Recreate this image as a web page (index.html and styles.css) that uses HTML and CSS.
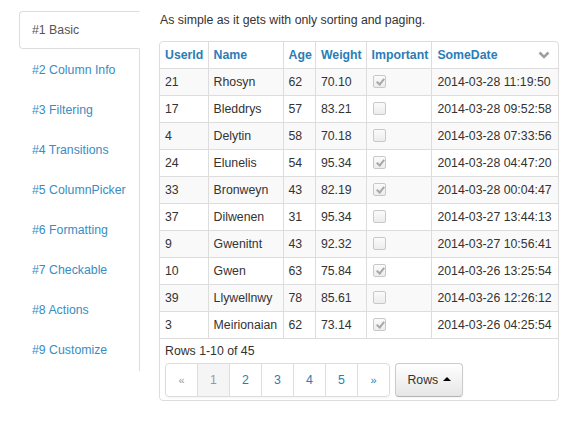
FILE: index.html
```html
<!DOCTYPE html>
<html>
<head>
<meta charset="utf-8">
<link rel="stylesheet" href="styles.css">
</head>
<body>
<div class="page">
  <ul class="tabs">
    <li class="active"><a>#1 Basic</a></li>
    <li><a>#2 Column Info</a></li>
    <li><a>#3 Filtering</a></li>
    <li><a>#4 Transitions</a></li>
    <li><a>#5 ColumnPicker</a></li>
    <li><a>#6 Formatting</a></li>
    <li><a>#7 Checkable</a></li>
    <li><a>#8 Actions</a></li>
    <li><a>#9 Customize</a></li>
  </ul>
  <div class="main">
    <p class="desc">As simple as it gets with only sorting and paging.</p>
    <div class="grid">
      <table>
        <colgroup>
          <col class="c1"><col class="c2"><col class="c3"><col class="c4"><col class="c5"><col class="c6">
        </colgroup>
        <thead>
          <tr>
            <th>UserId</th><th>Name</th><th>Age</th><th>Weight</th><th>Important</th>
            <th class="last-h">SomeDate<svg class="chev" width="12" height="8" viewBox="0 0 12 8"><polyline points="1.5,1.5 6,6 10.5,1.5" fill="none" stroke="#a0a0a0" stroke-width="2.6"/></svg></th>
          </tr>
        </thead>
        <tbody>
          <tr><td>21</td><td>Rhosyn</td><td>62</td><td>70.10</td><td><span class="cb on"></span></td><td>2014-03-28 11:19:50</td></tr>
          <tr><td>17</td><td>Bleddrys</td><td>57</td><td>83.21</td><td><span class="cb"></span></td><td>2014-03-28 09:52:58</td></tr>
          <tr><td>4</td><td>Delytin</td><td>58</td><td>70.18</td><td><span class="cb"></span></td><td>2014-03-28 07:33:56</td></tr>
          <tr><td>24</td><td>Elunelis</td><td>54</td><td>95.34</td><td><span class="cb on"></span></td><td>2014-03-28 04:47:20</td></tr>
          <tr><td>33</td><td>Bronweyn</td><td>43</td><td>82.19</td><td><span class="cb on"></span></td><td>2014-03-28 00:04:47</td></tr>
          <tr><td>37</td><td>Dilwenen</td><td>31</td><td>95.34</td><td><span class="cb"></span></td><td>2014-03-27 13:44:13</td></tr>
          <tr><td>9</td><td>Gwenitnt</td><td>43</td><td>92.32</td><td><span class="cb"></span></td><td>2014-03-27 10:56:41</td></tr>
          <tr><td>10</td><td>Gwen</td><td>63</td><td>75.84</td><td><span class="cb on"></span></td><td>2014-03-26 13:25:54</td></tr>
          <tr><td>39</td><td>Llywellnwy</td><td>78</td><td>85.61</td><td><span class="cb"></span></td><td>2014-03-26 12:26:12</td></tr>
          <tr><td>3</td><td>Meirionaian</td><td>62</td><td>73.14</td><td><span class="cb on"></span></td><td>2014-03-26 04:25:54</td></tr>
        </tbody>
      </table>
      <div class="footer">
        <div class="count">Rows 1-10 of 45</div>
        <div class="controls">
          <ul class="pager">
            <li class="dis">&laquo;</li>
            <li class="cur">1</li>
            <li>2</li>
            <li>3</li>
            <li>4</li>
            <li>5</li>
            <li class="next">&raquo;</li>
          </ul>
          <button class="rows-btn">Rows <span class="caret"></span></button>
        </div>
      </div>
    </div>
  </div>
</div>
</body>
</html>
```
FILE: styles.css
```css
html, body {
  margin: 0;
  padding: 0;
  background: #fff;
}
body {
  font-family: "Liberation Sans", Arial, sans-serif;
  font-size: 12.3px;
  color: #333;
}
.page {
  display: flex;
  align-items: flex-start;
  padding: 10px 0 0 19px;
}
.tabs {
  list-style: none;
  margin: 1px 0 0 0;
  padding: 0;
  width: 121px;
  border-right: 1px solid #ddd;
  box-sizing: border-box;
}
.tabs li a {
  display: block;
  padding: 8px 12px;
  line-height: 20px;
  border: 1px solid transparent;
  margin-bottom: 2px;
  margin-right: -1px;
  color: #3a8cc2;
  white-space: nowrap;
  border-radius: 4px 0 0 4px;
}
.tabs li.active a {
  color: #555;
  background: #fff;
  border-color: #ddd;
  border-right-color: #fff;
}
.main {
  margin-left: 19px;
  width: 400px;
}
.desc {
  margin: 0 0 11px 1px;
  line-height: 20px;
}
.grid {
  border: 1px solid #ddd;
  border-radius: 4px;
  overflow: hidden;
}
table {
  width: 398px;
  table-layout: fixed;
  border-collapse: separate;
  border-spacing: 0;
}
col.c1 { width: 47px; }
col.c2 { width: 74px; }
col.c3 { width: 32px; }
col.c4 { width: 50px; }
col.c5 { width: 65px; }
col.c6 { width: 125px; }
th, td {
  padding: 3px 5px;
  line-height: 20px;
  text-align: left;
  border-left: 1px solid #ddd;
  white-space: nowrap;
}
th:first-child, td:first-child {
  border-left: 0;
}
td {
  border-top: 1px solid #ddd;
}
th {
  color: #2b7db6;
  font-weight: bold;
}
.last-h {
  position: relative;
}
.chev {
  position: absolute;
  right: 8px;
  top: 9px;
}
tbody tr:nth-child(odd) td {
  background: #f9f9f9;
}
.cb {
  display: inline-block;
  vertical-align: middle;
  width: 11px;
  height: 11px;
  border: 1px solid #c8c8c8;
  border-radius: 2px;
  background: linear-gradient(#fbfbfb, #ececec);
  margin: -2px 0 0 1px;
  position: relative;
}
.cb.on::after {
  content: "";
  position: absolute;
  left: 4px;
  top: 1px;
  width: 3px;
  height: 6px;
  border: solid #a8a8a8;
  border-width: 0 2px 2px 0;
  transform: rotate(40deg);
}
.footer {
  border-top: 1px solid #ddd;
  padding: 2px 5px 3px 5px;
}
.count {
  line-height: 20px;
}
.controls {
  display: flex;
  align-items: stretch;
  margin-top: 2px;
}
.pager {
  list-style: none;
  margin: 0;
  padding: 0;
  display: flex;
  border: 1px solid #ddd;
  border-radius: 4px;
  box-shadow: 0 1px 2px rgba(0,0,0,0.05);
}
.pager li {
  width: 31px;
  text-align: center;
  line-height: 20px;
  padding: 6px 0;
  border-left: 1px solid #ddd;
  color: #2b7db6;
}
.pager li:first-child {
  border-left: 0;
  border-radius: 4px 0 0 4px;
}
.pager li.dis {
  color: #999;
  font-size: 11px;
}
.pager li.next {
  font-size: 11px;
}
.pager li.cur {
  background: #f5f5f5;
  color: #999;
}
.rows-btn {
  margin-left: 5px;
  width: 68px;
  font-family: "Liberation Sans", Arial, sans-serif;
  font-size: 12.3px;
  color: #333;
  border: 1px solid #ccc;
  border-bottom-color: #b3b3b3;
  border-radius: 4px;
  background: linear-gradient(#ffffff, #e6e6e6);
  box-shadow: inset 0 1px 0 rgba(255,255,255,0.2), 0 1px 2px rgba(0,0,0,0.05);
  padding: 0;
}
.caret {
  display: inline-block;
  width: 0;
  height: 0;
  vertical-align: middle;
  margin: -3px 0 0 1px;
  border-left: 4px solid transparent;
  border-right: 4px solid transparent;
  border-bottom: 4px solid #000;
}
```
